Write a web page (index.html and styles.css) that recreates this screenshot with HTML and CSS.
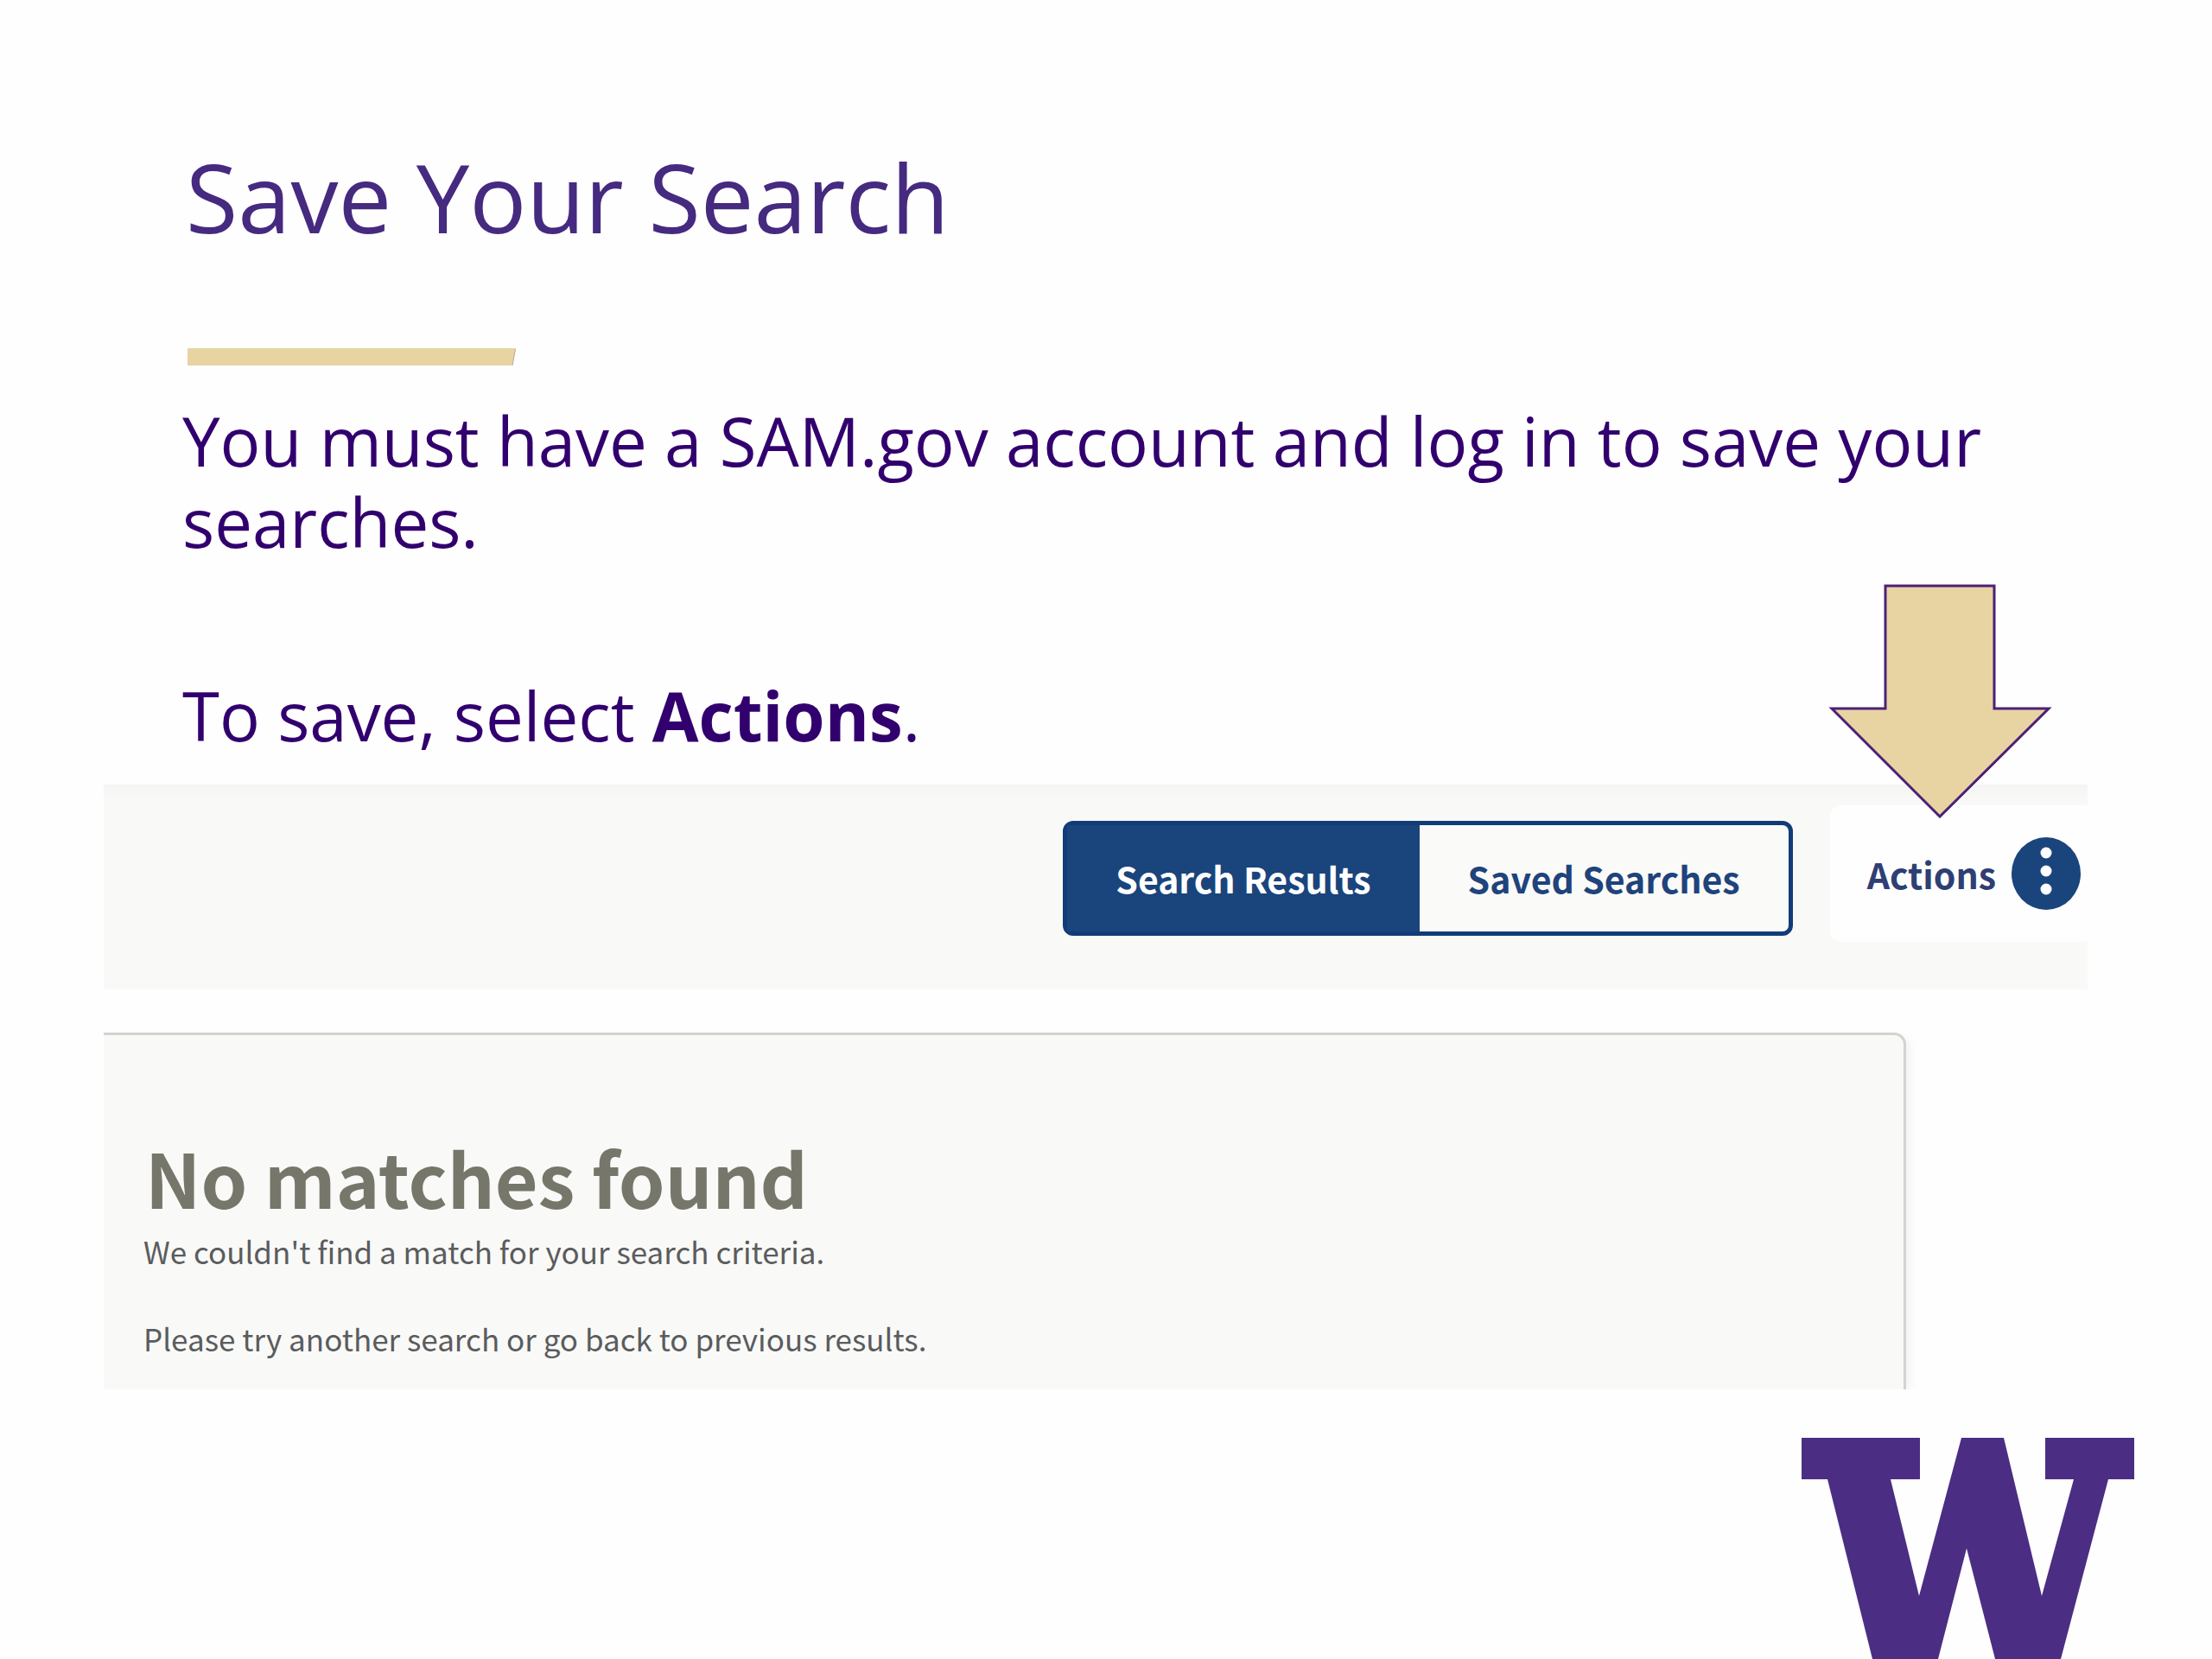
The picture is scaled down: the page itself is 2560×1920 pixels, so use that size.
FILE: index.html
```html
<!DOCTYPE html>
<html lang="en">
<head>
<meta charset="utf-8">
<title>Save Your Search</title>
<link rel="stylesheet" href="styles.css">
</head>
<body>
<main class="slide">
  <header class="intro">
    <h1 class="title">Save Your Search</h1>
    <svg class="rule" viewBox="0 0 380 20" aria-hidden="true"><path fill="#e8d3a2" d="M0 0H380L376 20H0Z"/><path fill="none" stroke="#b8ab98" stroke-width="1" d="M379.500 1L376 20"/></svg>
    <p class="lead">You must have a SAM.gov account and log in to save your searches.</p>
    <p class="lead">To save, select <strong>Actions</strong>.</p>
  </header>

  <section class="toolbar" aria-label="Search toolbar">
    <div class="toggle">
      <button class="toggle-button active" type="button">Search Results</button>
      <button class="toggle-button" type="button">Saved Searches</button>
    </div>
    <div class="actions">
      <svg class="arrow" viewBox="0 0 260 272" aria-hidden="true"><path fill="#e8d3a2" stroke="#4b2077" stroke-width="3" d="M66 3H192V145H255L129 270L4 145H66Z"/></svg>
      <button class="actions-button" type="button">Actions
        <svg class="dots" viewBox="0 0 80 84" aria-hidden="true"><ellipse cx="40" cy="42" rx="40" ry="42" fill="#1a447c"/><g fill="#fff"><circle cx="40" cy="18" r="6.500"/><circle cx="40" cy="39" r="6.500"/><circle cx="40" cy="60" r="6.500"/></g></svg>
      </button>
    </div>
  </section>

  <section class="results">
    <div class="card">
      <h2 class="card-title">No matches found</h2>
      <p class="card-text">We couldn't find a match for your search criteria.</p>
      <p class="card-text">Please try another search or go back to previous results.</p>
    </div>
  </section>

  <footer class="footer">
    <svg class="logo" viewBox="0 0 386 256" role="img" aria-label="W"><path fill="#4b2e83" d="M0 0H137V48H103L136 183L185 0H234L278 183L315 48H282V0H385V48H355L300 256H224L191 128L158 256H82L30 48H0Z"/></svg>
  </footer>
</main>
</body>
</html>
```
FILE: styles.css
```css
* {
  box-sizing: border-box;
}

body {
  margin: 0;
  background: #fefefe;
  font-family: "Open Sans", "Noto Sans", sans-serif;
}

h1, h2, p {
  margin: 0;
}

button {
  border: 0;
  background: none;
  font: inherit;
}

.slide {
  display: flex;
  flex-direction: column;
  min-height: 100vh;
}

.intro {
  padding: 157px 200px 33px 211px;
}

.title {
  font-size: 110px;
  font-weight: 400;
  line-height: 140px;
  padding-left: 4px;
  color: #452a80;
}

.rule {
  display: block;
  width: 380px;
  height: 20px;
  margin: 106px 0 40px 6px;
}

.lead {
  font-size: 78px;
  line-height: 94px;
  color: #32006e;
}

.lead + .lead {
  margin-top: 130px;
}

.toolbar,
.results {
  font-family: "Noto Sans CJK SC", "Open Sans", sans-serif;
}

.toolbar {
  display: flex;
  justify-content: flex-end;
  align-items: flex-start;
  gap: 43px;
  margin: 0 144px 0 120px;
  padding: 24px 0 55px;
  background: linear-gradient(#f4f4f4, #f9f9f7 18px);
}

.toggle {
  display: flex;
  margin-top: 18px;
  border: 5px solid #123c78;
  border-radius: 12px;
  background: #fafaf8;
}

.toggle-button {
  padding: 0 56px;
  font-size: 41px;
  font-weight: 700;
  line-height: 123px;
  color: #1f437b;
}

.toggle-button.active {
  background: #1a447c;
  color: #fff;
}

.actions {
  position: relative;
  border-radius: 12px 0 0 12px;
  background: #fefefe;
}

.arrow {
  position: absolute;
  left: -2px;
  bottom: 143px;
  width: 260px;
  height: 272px;
}

.actions-button {
  display: flex;
  align-items: center;
  gap: 18px;
  height: 158px;
  padding: 0 8px 0 43px;
  font-size: 41px;
  font-weight: 700;
  color: #2e3f74;
}

.dots {
  width: 80px;
  height: 84px;
}

.results {
  margin: 50px 144px 0 120px;
  padding-right: 210px;
  overflow: hidden;
}

.card {
  padding: 108px 46px 29px;
  border: solid #d3d4cf;
  border-width: 3px 3px 0 0;
  border-radius: 0 14px 0 0;
  background: #f9f9f7;
  box-shadow: 6px 4px 10px #0000000a;
}

.card-title {
  padding-left: 2px;
  font-size: 86px;
  font-weight: 700;
  line-height: 112px;
  color: #76766a;
}

.card-text {
  font-size: 35px;
  line-height: 60px;
  color: #5a5c5e;
}

.card-text + .card-text {
  margin-top: 41px;
}

.footer {
  display: flex;
  justify-content: flex-end;
  margin-top: auto;
  padding-right: 89px;
}

.logo {
  display: block;
  width: 386px;
  height: 256px;
}
```
